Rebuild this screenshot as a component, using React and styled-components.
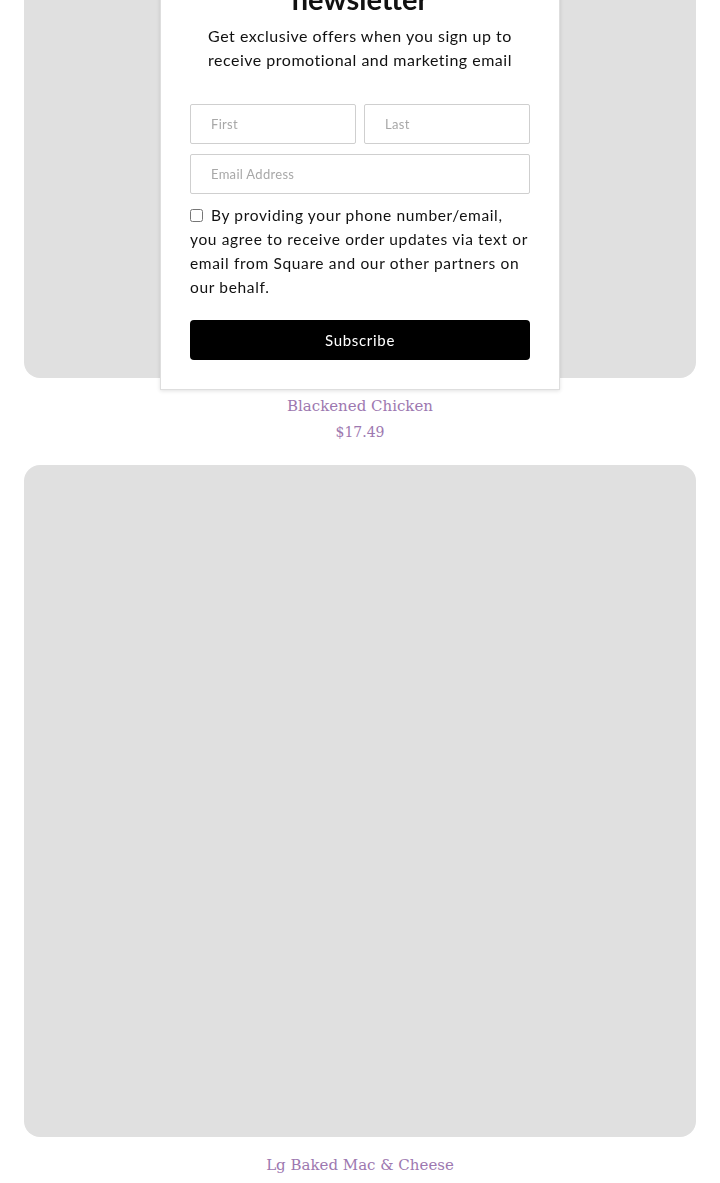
import React from "react";
import styled, { createGlobalStyle } from "styled-components";

const Global = createGlobalStyle`
  html, body { margin: 0; padding: 0; background: #fff; }
  body { font-family: Lato, "Open Sans", sans-serif; overflow: hidden; }
  * { box-sizing: border-box; }
`;

const Page = styled.div`
  padding: 0 24px;
  margin-top: -294px;
  display: flex;
  flex-direction: column;
  gap: 20px;
`;

const Product = styled.div`
  display: flex;
  flex-direction: column;
  align-items: center;
`;

const Photo = styled.div`
  width: 100%;
  aspect-ratio: 1 / 1;
  background: #e0e0e0;
  border-radius: 16px;
`;

const Name = styled.div`
  margin-top: 15px;
  font-family: "DejaVu Serif", serif;
  font-size: 15px;
  line-height: 26px;
  color: #9d78b0;
`;

const Price = styled.div`
  font-family: "DejaVu Serif", serif;
  font-size: 14px;
  line-height: 26px;
  color: #9d78b0;
`;

const Modal = styled.div`
  position: fixed;
  top: -48px;
  left: 160px;
  width: 400px;
  background: #fff;
  border: 1px solid #dedede;
  box-shadow: 0 1px 4px rgba(0, 0, 0, 0.12);
  padding: 30px 29px 29px;
  display: flex;
  flex-direction: column;
  font-family: Lato, "Open Sans", sans-serif;
  color: #111;
`;

const Title = styled.h2`
  margin: 0;
  text-align: center;
  font-size: 29px;
  line-height: 32px;
  font-weight: 700;
`;

const Lead = styled.p`
  margin: 9px 0 0;
  text-align: center;
  font-size: 16px;
  line-height: 24px;
  letter-spacing: 0.5px;
`;

const NameRow = styled.div`
  margin-top: 32px;
  display: grid;
  grid-template-columns: 1fr 1fr;
  gap: 8px;
`;

const Input = styled.input`
  height: 40px;
  width: 100%;
  border: 1px solid #cfcfcf;
  border-radius: 2px;
  padding: 0 20px;
  font-family: Lato, sans-serif;
  font-size: 13px;
  letter-spacing: 0.3px;
  color: #333;
  outline: none;
  &::placeholder { color: #a8a8a8; }
`;

const EmailInput = styled(Input)`
  margin-top: 10px;
`;

const Consent = styled.label`
  margin-top: 9px;
  font-size: 15.5px;
  line-height: 24px;
  letter-spacing: 0.65px;
  color: #111;
`;

const Check = styled.input`
  width: 13px;
  height: 13px;
  margin: 0 8px 0 0;
  vertical-align: -1px;
`;

const Button = styled.button`
  margin-top: 21px;
  height: 40px;
  width: 100%;
  border: none;
  border-radius: 4px;
  background: #000;
  color: #fff;
  font-family: Lato, sans-serif;
  font-size: 15px;
  letter-spacing: 0.7px;
`;

const products = [
  { name: "Blackened Chicken", price: "$17.49" },
  { name: "Lg Baked Mac & Cheese", price: "$12.99" },
  { name: "Fried Catfish", price: "$15.99" },
];

export default function App() {
  return (
    <>
      <Global />
      <Page>
        {products.map((p) => (
          <Product key={p.name}>
            <Photo />
            <Name>{p.name}</Name>
            <Price>{p.price}</Price>
          </Product>
        ))}
      </Page>
      <Modal>
        <Title>newsletter</Title>
        <Lead>Get exclusive offers when you sign up to receive promotional and marketing email</Lead>
        <NameRow>
          <Input placeholder="First" />
          <Input placeholder="Last" />
        </NameRow>
        <EmailInput placeholder="Email Address" />
        <Consent>
          <Check type="checkbox" />
          By providing your phone number/email, you agree to receive order updates via text or email from Square and our other partners on our behalf.
        </Consent>
        <Button>Subscribe</Button>
      </Modal>
    </>
  );
}
